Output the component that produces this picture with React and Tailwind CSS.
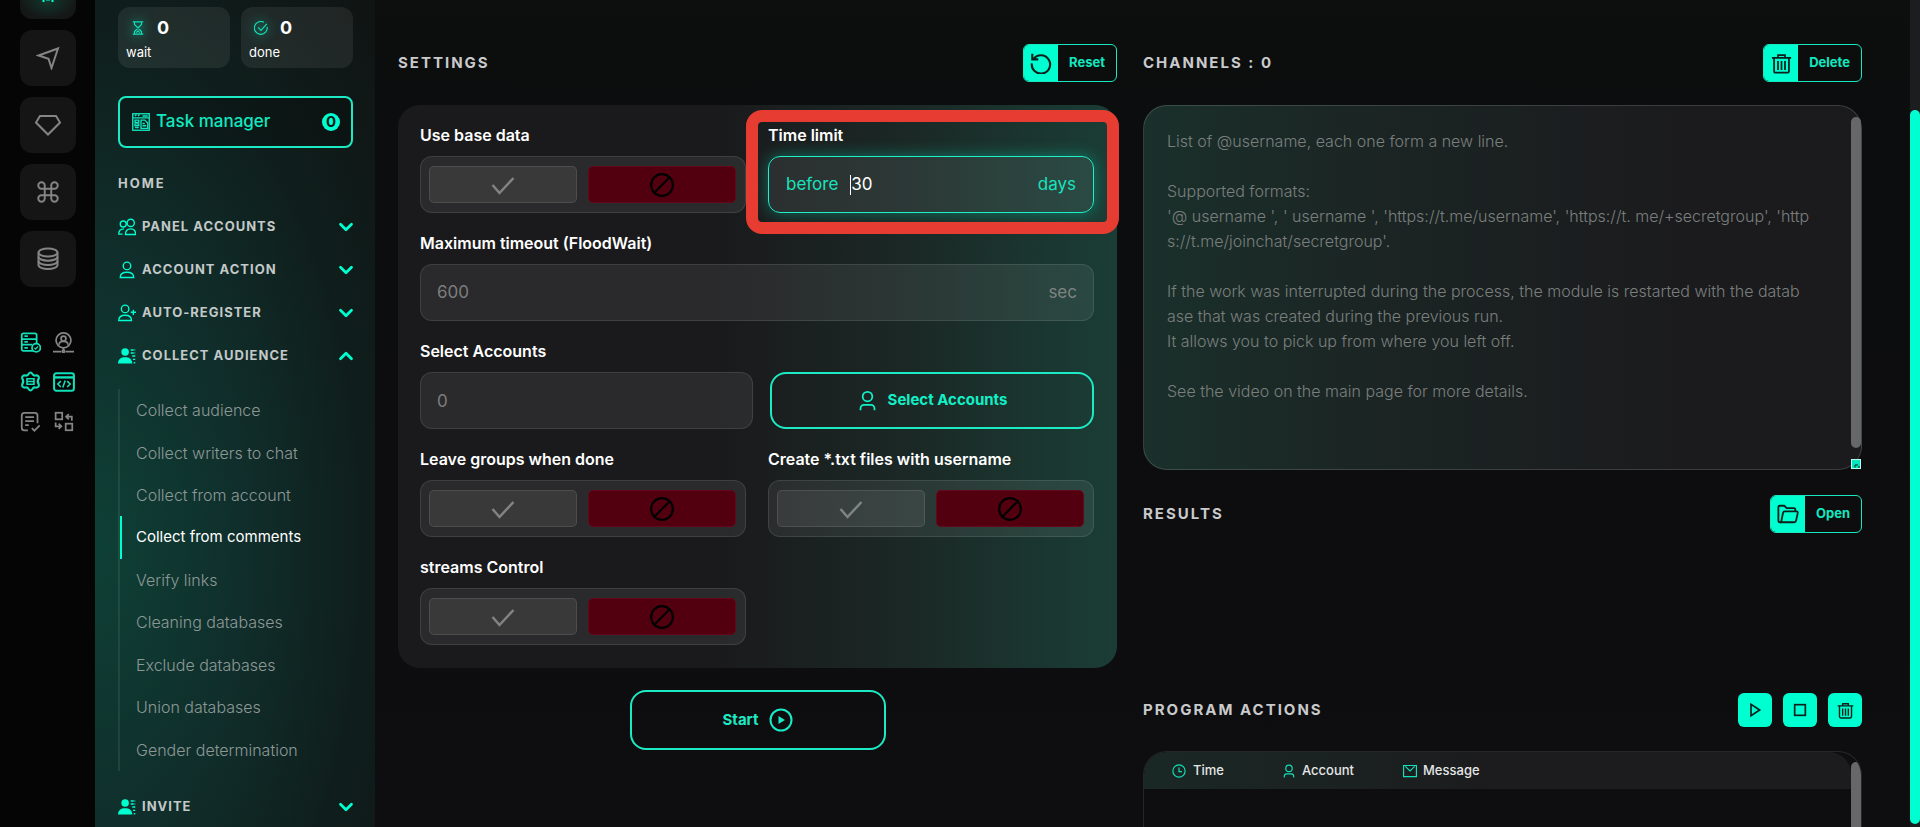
import { Ban, ChevronDown, ChevronUp, Command } from "lucide-react";

const SUBMENU = [
  "Collect audience",
  "Collect writers to chat",
  "Collect from account",
  "Collect from comments",
  "Verify links",
  "Cleaning databases",
  "Exclude databases",
  "Union databases",
  "Gender determination",
];

// Base for the line icons, all of them take their colour from the text
function Icon({ size = 18, box = 24, stroke = 2, className = "", children }) {
  return (
    <svg
      width={size}
      height={size}
      viewBox={`0 0 ${box} ${box}`}
      fill="none"
      stroke="currentColor"
      strokeWidth={stroke}
      className={`shrink-0 ${className}`}
      aria-hidden="true"
    >
      {children}
    </svg>
  );
}

const UserIcon = (props) => (
  <Icon {...props}>
    <circle cx="12" cy="7.5" r="5.5" />
    <path d="M4 23v-2a4 4 0 0 1 4-4h8a4 4 0 0 1 4 4v2" />
  </Icon>
);

const TrashIcon = (props) => (
  <Icon {...props}>
    <path d="M1 5.500h22M8 5V2.500h8V5M3.500 6v14.500q0 2 2 2h13q2 0 2-2V6" />
    <path d="M8 9v10.500M12 9v10.500M16 9v10.500" />
  </Icon>
);

const MemberIcon = () => (
  <Icon size={18} stroke={1.8}>
    <circle cx="9.500" cy="6.500" r="5" fill="currentColor" stroke="none" />
    <path d="M0 22c0-6 4-8.500 9.500-8.500S19 16 19 22z" fill="currentColor" stroke="none" />
    <path d="M17 4h6M17 8h6M19 12h4M20 16.500h3M21 21h2" strokeDasharray="4 1" />
  </Icon>
);

function RailTile({ label, children }) {
  return (
    <button
      aria-label={label}
      className="flex h-14 w-14 items-center justify-center rounded-xl bg-[#151516] text-[#858585]"
    >
      {children}
    </button>
  );
}

function Rail() {
  return (
    <aside className="flex w-[95px] shrink-0 flex-col bg-[#050506] pl-5">
      <div className="flex flex-col gap-[11px]">
        <button
          aria-label="Home"
          className="flex h-[19px] w-14 justify-center overflow-hidden rounded-b-xl bg-[radial-gradient(ellipse_at_50%_0%,#12382f_0%,#151716_70%)] text-[#00ffd0]"
        >
          <Icon size={14} box={14} stroke={2}>
            <path d="M2.500 2V0M11.500 2V0" />
            <path d="M5 0h4" strokeWidth="1" />
          </Icon>
        </button>
        <RailTile label="Send">
          <Icon size={24} stroke={2}>
            <path d="M2.500 9.500 22 2.500 15.500 22 12.500 12.800z" />
          </Icon>
        </RailTile>
        <RailTile label="Premium">
          <Icon size={28} box={28} stroke={2}>
            <path d="M6 5h16l4 6.500L14 23.500 2 11.500z" />
          </Icon>
        </RailTile>
        <RailTile label="Commands">
          <Command size={26} strokeWidth={1.8} />
        </RailTile>
        <RailTile label="Databases">
          <Icon size={24} stroke={2}>
            <ellipse cx="12" cy="5.500" rx="9.500" ry="4" />
            <path d="M2.500 5.500v12.500c0 2.200 4.200 4 9.500 4s9.500-1.800 9.500-4V5.500" />
            <path d="M2.500 9.700c0 2.200 4.200 4 9.500 4s9.500-1.800 9.500-4M2.500 14c0 2.200 4.200 4 9.500 4s9.500-1.800 9.500-4" />
          </Icon>
        </RailTile>
      </div>

      <div className="mt-[45px] grid w-[56px] grid-cols-[22px_22px] gap-x-[11px] gap-y-[18px] text-[#12e0b9]">
        <Icon size={21}>
          <rect x="2" y="1.500" width="17" height="20" rx="2" />
          <path d="M2 8h17M2 14.500h12M5 4.800h4M5 11.200h4M5 18h4" />
          <circle cx="18.500" cy="18" r="4.800" fill="#050506" />
          <path d="m16.500 18 1.500 1.500 2.500-3" strokeWidth="1.500" />
        </Icon>
        <Icon size={21} className="text-[#858585]">
          <circle cx="12" cy="9.500" r="8.500" />
          <circle cx="12" cy="7.500" r="2.800" />
          <path d="M7 14.500c0-5 10-5 10 0M12 18v3M0 22.500h9.500M14.500 22.500H24" />
          <circle cx="12" cy="22" r="1.300" />
        </Icon>
        <Icon size={21} stroke={2.4}>
          <path
            strokeLinejoin="round"
            d="M9.800 3.500Q12 0 14.200 3.500Q15.500 6 18.200 5Q22 5 21.500 8.500Q19 12 21.500 15.500Q22 19 18.200 19Q15.500 18 14.200 20.500Q12 24 9.800 20.500Q8.500 18 5.800 19Q2 19 2.500 15.500Q5 12 2.500 8.500Q2 5 5.800 5Q8.500 6 9.800 3.500z"
          />
          <path d="M8 8.800h8v6.400H8zM8 12h8" strokeWidth="1.800" />
        </Icon>
        <Icon size={22} stroke={2.2}>
          <rect x="1.200" y="2.500" width="21.600" height="19" rx="2.500" />
          <path d="M1 7h22" strokeWidth="2.600" />
          <path d="m8.500 11-3.200 3.200 3.200 3.200m7-6.400 3.200 3.200-3.200 3.200m-2.200-7-2.600 7.500" strokeWidth="1.700" />
        </Icon>
        <Icon size={21} className="text-[#858585]">
          <path d="M9 22H5q-3 0-3-3V5q0-3 3-3h12q3 0 3 3v9M6 7h10M6 11.500h10M6 16h4" />
          <path d="m13.500 19.500 3 3 6-6" />
        </Icon>
        <Icon size={21} className="text-[#858585]">
          <rect x="3" y="2" width="7.500" height="7.500" />
          <rect x="14.500" y="14.500" width="7.500" height="7.500" />
          <path d="M21.500 11V6.500H15m3-3-3 3 3 3M3 13v4.500h6.500m-3-3 3 3-3 3" />
        </Icon>
      </div>
    </aside>
  );
}

function StatCard({ icon, value, label }) {
  return (
    <div className="h-[61px] flex-1 rounded-xl bg-white/7 px-2 pt-[7px]">
      <div className="flex h-7 items-center gap-3 pl-[5px]">
        <span className="flex text-[#12e0b9] drop-shadow-[0_0_6px_rgba(0,255,208,0.8)]">{icon}</span>
        <span className="text-lg font-bold text-white">{value}</span>
      </div>
      <p className="text-[13px] leading-5 text-white">{label}</p>
    </div>
  );
}

function NavItem({ icon, label, open }) {
  const Chevron = open ? ChevronUp : ChevronDown;
  return (
    <button className="flex h-[43px] w-full items-center gap-[6px] text-[13px] font-bold tracking-[1px] text-[#c3c9c8]">
      <span className="flex text-[#00ffd0]">{icon}</span>
      {label}
      <Chevron size={22} strokeWidth={3} className="-mr-1 ml-auto text-[#00ffd0]" />
    </button>
  );
}

function Sidebar() {
  return (
    <nav className="w-[280px] shrink-0 bg-[radial-gradient(ellipse_at_0%_66%,#0e4036_0%,#102e2b_38%,#0f1e1c_68%,#101413_100%)] pt-[7px] pr-[22px] pl-[23px]">
      <div className="flex gap-[11px]">
        <StatCard
          value="0"
          label="wait"
          icon={
            <Icon size={14}>
              <path d="M3 1.500h18M3 22.500h18M6 2v4l12 12v4M18 2v4L6 18v4M9 20l3-3 3 3" />
            </Icon>
          }
        />
        <StatCard
          value="0"
          label="done"
          icon={
            <Icon size={14}>
              <path d="M22.500 10A11 11 0 1 1 17 2.300M7 11l5 5L22 5" />
            </Icon>
          }
        />
      </div>

      <button className="mt-7 flex h-[52px] w-full items-center gap-[6px] rounded-lg border-2 border-[#1beac4] bg-black/20 pr-[11px] pl-3 text-[17px] font-medium text-[#12e8c0]">
        <Icon size={18} stroke={1.8}>
          <rect x="1" y="1" width="22" height="22" />
          <path d="M1 6.500h22M4 4l2-2M8 4l2-2M14 4h7M4 9.500h5v3H4zM4 14.500h5v2.500H4zM4 19.500h5M12 9.500h5l4 4v7h-9zM14 14h3M14 17h5" />
        </Icon>
        Task manager
        <span className="ml-auto flex h-[18px] w-[18px] items-center justify-center rounded-full bg-[#00ffd0] text-[15px] font-bold text-[#0c1b18]">
          0
        </span>
      </button>

      <p className="mt-[14px] flex h-[43px] items-center text-[13px] font-bold tracking-[2px] text-[#c3c9c8]">HOME</p>
      <NavItem
        label="PANEL ACCOUNTS"
        icon={
          <Icon size={18} stroke={1.8}>
            <circle cx="7" cy="8" r="4" />
            <circle cx="17" cy="6.500" r="4.800" />
            <path d="M10 22c0-5 3-7.500 7-7.500s6.500 2.500 6.500 7.500zM8 14.500c-5 0-7 2.500-7 7h5" />
          </Icon>
        }
      />
      <NavItem
        label="ACCOUNT ACTION"
        icon={
          <Icon size={18} stroke={1.8}>
            <circle cx="12" cy="6.500" r="5" />
            <path d="M3 22c0-5 3-7 9-7s9 2 9 7z" />
          </Icon>
        }
      />
      <NavItem
        label="AUTO-REGISTER"
        icon={
          <Icon size={18} stroke={1.8}>
            <circle cx="9.500" cy="6.500" r="5" />
            <path d="M1 22c0-5 2.500-7 8.500-7s8.500 2 8.500 7zM17 11h7M20.500 7.500v7" />
          </Icon>
        }
      />
      <NavItem label="COLLECT AUDIENCE" icon={<MemberIcon />} open />

      <ul className="mt-3 grid h-[382px] auto-rows-fr border-l-2 border-white/8">
        {SUBMENU.map((item) => (
          <li
            key={item}
            className={
              item === "Collect from comments"
                ? "flex items-center border-l-2 border-[#00ffd0] pl-[14px] text-[15px] text-white"
                : "flex items-center pl-4 text-base font-light text-[#8d9896]"
            }
          >
            <a href="#">{item}</a>
          </li>
        ))}
      </ul>

      <div className="mt-[14px]">
        <NavItem label="INVITE" icon={<MemberIcon />} />
      </div>
    </nav>
  );
}

function TagButton({ icon, children }) {
  return (
    <button className="flex h-[38px] items-stretch overflow-hidden rounded-md border border-[#17e8c2] text-[13px] font-bold text-[#12e8c0]">
      <span className="flex w-[34px] items-center justify-center bg-[#00ffd0] text-[#0b1f1b]">{icon}</span>
      <span className="flex items-center px-[11px]">{children}</span>
    </button>
  );
}

function SectionTitle({ children }) {
  return <h2 className="text-[15px] font-bold tracking-[2px] text-[#c9cacb]">{children}</h2>;
}

function Toggle({ id, label }) {
  return (
    <div role="group" aria-labelledby={id}>
      <p id={id} className="mb-[9px] text-base leading-6 font-semibold text-white">{label}</p>
      <div className="grid h-[57px] grid-cols-2 gap-[11px] rounded-xl border border-white/10 bg-white/7 py-[9px] pr-[9px] pl-2">
        <button aria-label="On" className="flex items-center justify-center rounded-[5px] border border-white/10 bg-white/7 text-[#828384]">
          <Icon size={24}>
            <path d="m1.500 12 7 8L22.500 5" strokeWidth="2.500" />
          </Icon>
        </button>
        <button aria-label="Off" className="flex items-center justify-center rounded-[5px] border border-[#66081b] bg-[#52000f] text-black">
          <Ban size={26} strokeWidth={2} className="-scale-x-100" />
        </button>
      </div>
    </div>
  );
}

function Settings() {
  return (
    <section>
      <div className="flex h-[38px] items-center justify-between">
        <SectionTitle>SETTINGS</SectionTitle>
        <TagButton
          icon={
            <Icon size={22}>
              <path d="M4 7.500a10 10 0 1 1-2 5M2.500 2v6h6.500" strokeWidth="2.300" />
            </Icon>
          }
        >
          Reset
        </TagButton>
      </div>

      <div className="mt-[23px] grid grid-cols-2 gap-x-[22px] gap-y-[18px] rounded-[22px] bg-[linear-gradient(90deg,#1a1a1c_45%,#1b2926_72%,#1a3a33_95%,#1b3d36_100%)] pt-[18px] pr-[23px] pb-[23px] pl-[22px]">
        <Toggle id="base" label="Use base data" />

        <div className="relative">
          <label htmlFor="limit" className="mb-[9px] block text-base leading-6 font-semibold text-white">Time limit</label>
          <div className="flex h-[57px] items-center rounded-xl border border-[#1ff0c9] bg-white/8 px-[17px] text-[17px] text-[#17e3bd] shadow-[0_0_16px_rgba(0,255,208,0.35)]">
            <span>before</span>
            <span className="ml-3 h-5 w-px bg-white" />
            <input id="limit" defaultValue="30" className="w-full min-w-0 flex-1 bg-transparent text-white outline-none" />
            <span>days</span>
          </div>
          <div className="pointer-events-none absolute -top-[13px] -right-[25px] -bottom-[21px] -left-[22px] rounded-2xl border-12 border-[#e63c32]" />
        </div>

        <div className="col-span-2">
          <label htmlFor="timeout" className="mb-[9px] block text-base leading-6 font-semibold text-white">
            Maximum timeout (FloodWait)
          </label>
          <div className="flex h-[57px] items-center rounded-xl border border-white/10 bg-white/7 px-4 text-[17px] text-[#7e8483]">
            <input id="timeout" placeholder="600" className="min-w-0 flex-1 bg-transparent outline-none placeholder:text-[#7c7d7e]" />
            <span>sec</span>
          </div>
        </div>

        <div className="col-span-2">
          <label htmlFor="accounts" className="mb-[9px] block text-base leading-6 font-semibold text-white">Select Accounts</label>
          <div className="flex gap-[17px]">
            <input
              id="accounts"
              placeholder="0"
              className="h-[57px] w-[333px] min-w-0 flex-1 rounded-xl border border-white/10 bg-white/7 px-4 text-[17px] outline-none placeholder:text-[#7c7d7e]"
            />
            <button className="flex h-[57px] w-[324px] items-center justify-center gap-[10px] rounded-2xl border-2 border-[#1beac4] text-[15px] font-bold text-[#12f0c8]">
              <UserIcon size={21} />
              Select Accounts
            </button>
          </div>
        </div>

        <Toggle id="leave" label="Leave groups when done" />
        <Toggle id="txt" label="Create *.txt files with username" />
        <Toggle id="streams" label="streams Control" />
      </div>

      <button className="mx-auto mt-[22px] flex h-[60px] w-64 items-center justify-center gap-[10px] rounded-2xl border-2 border-[#1beac4] text-[15px] font-bold text-[#1beac4]">
        Start
        <Icon size={24}>
          <circle cx="12" cy="12" r="10.500" />
          <path d="M9.500 8v8l6.500-4z" fill="currentColor" stroke="none" />
        </Icon>
      </button>
    </section>
  );
}

const HINT = `List of @username, each one form a new line.

Supported formats:
'@ username ', ' username ', 'https://t.me/username', 'https://t. me/+secretgroup', 'http
s://t.me/joinchat/secretgroup'.

If the work was interrupted during the process, the module is restarted with the datab
ase that was created during the previous run.
It allows you to pick up from where you left off.

See the video on the main page for more details.`;

function SquareButton({ label, children }) {
  return (
    <button aria-label={label} className="flex h-[34px] w-[34px] items-center justify-center rounded-md bg-[#00ffd0] text-[#0b1f1b]">
      {children}
    </button>
  );
}

function Channels() {
  return (
    <section className="flex min-h-0 flex-col">
      <div className="flex h-[38px] items-center justify-between">
        <SectionTitle>CHANNELS : 0</SectionTitle>
        <TagButton icon={<TrashIcon size={21} />}>Delete</TagButton>
      </div>

      <div className="relative mt-[23px] h-[365px] shrink-0">
        <textarea
          aria-label="Channels"
          placeholder={HINT}
          className="h-full w-full resize-none overflow-hidden rounded-3xl border border-white/15 bg-[linear-gradient(90deg,#1a302b_0%,#1b2725_25%,#1b1f20_55%,#1b1b1d_75%)] px-[23px] py-[23px] text-base leading-[25px] font-light outline-none placeholder:text-[#7a7f7e]"
        />
        <span className="absolute top-3 right-px h-[331px] w-[10px] rounded-full bg-[#676769]" />
        <span className="absolute right-px bottom-px flex h-[10px] w-[10px] items-end justify-end border border-[#b9fff1] bg-[#00e5bd] text-[#0b1f1b]">
          <Icon size={6} box={6} stroke={1}>
            <path d="M1 5.500V3h3M5 6V4" />
          </Icon>
        </span>
      </div>

      <div className="mt-[25px] flex h-[38px] items-center justify-between">
        <SectionTitle>RESULTS</SectionTitle>
        <TagButton
          icon={
            <Icon size={22}>
              <path d="M4.500 21H3.500q-2 0-2-2V4.500q0-1.500 1.500-1.500h5l2.500 2.500h8q1.500 0 1.500 2v1.500" />
              <path d="M4.500 21 6.500 11q.4-1.800 2-1.800h12.500q2 0 1.600 1.800l-1.800 8.200q-.4 1.800-2 1.800z" />
            </Icon>
          }
        >
          Open
        </TagButton>
      </div>

      <div className="mt-[160px] flex items-center justify-between">
        <SectionTitle>PROGRAM ACTIONS</SectionTitle>
        <div className="flex gap-[11px]">
          <SquareButton label="Play">
            <Icon size={16} stroke={2.5}>
              <path d="M6 3.500v17l13-8.500z" />
            </Icon>
          </SquareButton>
          <SquareButton label="Stop">
            <Icon size={16} stroke={2.5}>
              <rect x="4" y="4" width="16" height="16" />
            </Icon>
          </SquareButton>
          <SquareButton label="Clear">
            <TrashIcon size={17} />
          </SquareButton>
        </div>
      </div>

      <div className="mt-6 flex min-h-0 flex-1 overflow-hidden rounded-t-3xl border border-b-0 border-white/10">
        <div className="flex-1">
          <table className="w-full overflow-hidden rounded-t-[22px] bg-[linear-gradient(90deg,#1a2825_0%,#1b2322_22%,#1c1b1e_50%)] text-left text-[13px] text-[#e4e6e6]">
            <thead>
              <tr className="h-[37px]">
                <th className="w-[110px] pl-7 font-medium">
                  <span className="flex items-center gap-[7px]">
                    <Icon size={14} className="text-[#12e0b9]">
                      <circle cx="12" cy="12" r="10.500" />
                      <path d="M12 6v7h5" />
                    </Icon>
                    Time
                  </span>
                </th>
                <th className="w-[121px] pl-7 font-medium">
                  <span className="flex items-center gap-[6px]">
                    <UserIcon size={14} className="text-[#12e0b9]" />
                    Account
                  </span>
                </th>
                <th className="pl-7 font-medium">
                  <span className="flex items-center gap-[6px]">
                    <Icon size={14} className="text-[#12e0b9]">
                      <path d="M1 2.500h22v19H1zM4 4l8 8 8-8" />
                    </Icon>
                    Message
                  </span>
                </th>
              </tr>
            </thead>
          </table>
        </div>
        <span className="mt-[10px] w-[10px] rounded-t-full bg-[#676769]" />
      </div>
    </section>
  );
}

export default function App() {
  return (
    <div className="flex h-screen overflow-hidden bg-[#0d0d0e] font-['Inter',sans-serif] text-white">
      <Rail />
      <Sidebar />
      <main className="grid min-w-0 flex-1 grid-cols-2 grid-rows-[minmax(0,1fr)] gap-[26px] bg-[linear-gradient(180deg,#0c0f0e_0%,#0c0d0e_15%,#0e0d0f_100%)] pt-11 pr-12 pl-[23px]">
        <Settings />
        <Channels />
      </main>
      <div className="w-[10px] shrink-0 bg-[#1c1d1f] pt-[110px] pb-[3px]">
        <div className="h-full rounded-full bg-[#00ffd0]" />
      </div>
    </div>
  );
}
